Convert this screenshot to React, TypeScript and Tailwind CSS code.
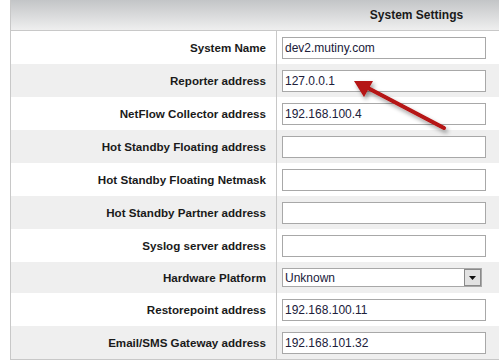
const rows: { label: string; value?: string; select?: boolean }[] = [
  { label: 'System Name', value: 'dev2.mutiny.com' },
  { label: 'Reporter address', value: '127.0.0.1' },
  { label: 'NetFlow Collector address', value: '192.168.100.4' },
  { label: 'Hot Standby Floating address', value: '' },
  { label: 'Hot Standby Floating Netmask', value: '' },
  { label: 'Hot Standby Partner address', value: '' },
  { label: 'Syslog server address', value: '' },
  { label: 'Hardware Platform', select: true },
  { label: 'Restorepoint address', value: '192.168.100.11' },
  { label: 'Email/SMS Gateway address', value: '192.168.101.32' },
];

function Arrow() {
  return (
    <svg className="absolute left-0 top-0 pointer-events-none" width="499" height="364">
      <defs>
        <filter id="shadow" x="-20%" y="-20%" width="140%" height="160%">
          <feDropShadow dx="2" dy="3" stdDeviation="2" floodColor="#000" floodOpacity="0.4" />
        </filter>
      </defs>
      <g filter="url(#shadow)">
        <line x1="366" y1="87" x2="444" y2="128" stroke="#b51212" strokeWidth="4" strokeLinecap="round" />
        <polygon points="354,81 373,81 364,97" fill="#b51212" />
      </g>
    </svg>
  );
}

function SelectBox() {
  return (
    <div className="w-[200px] h-[19px] border border-[#a8a8a8] bg-white flex items-center justify-between">
      <span className="pl-[2px] text-[12px] text-[#20203a]">Unknown</span>
      <div className="w-[17px] h-[17px] border border-[#8a8a8a] bg-[#e2e2e2] flex items-center justify-center">
        <svg width="7" height="4" viewBox="0 0 7 4">
          <polygon points="0,0 7,0 3.5,4" fill="#111" />
        </svg>
      </div>
    </div>
  );
}

export default function App() {
  return (
    <div
      className="relative w-[499px] h-[364px] overflow-hidden bg-white"
      style={{ fontFamily: '"Liberation Sans", Arial, sans-serif' }}
    >
      <div className="ml-[10px] w-[546px] border-l border-b border-[#c8c8c8]">
        <div className="grid grid-cols-[266px_1fr] h-[31px] border-b border-[#c8c8c8] bg-gradient-to-b from-[#c3c5c7] to-[#efefef]">
          <div />
          <div className="flex items-center justify-center text-[12px] font-bold text-[#1a1a1a]">
            System Settings
          </div>
        </div>
        {rows.map((r, i) => (
          <div
            key={r.label}
            className={`grid grid-cols-[266px_1fr] ${r.select ? 'h-[31px]' : 'h-[33px]'} ${
              i % 2 === 1 ? 'bg-[#efefef]' : 'bg-white'
            }`}
          >
            <div className="flex items-center justify-end pr-[10px] border-r border-[#c8c8c8] text-[11.6px] font-bold text-[#1a1a1a]">
              {r.label}
            </div>
            <div className="flex items-center pl-[5px]">
              {r.select ? (
                <SelectBox />
              ) : (
                <div className="w-[204px] h-[22px] border border-[#a8a8a8] bg-white flex items-center pl-[2px] text-[12px] text-[#20203a]">
                  {r.value}
                </div>
              )}
            </div>
          </div>
        ))}
      </div>
      <Arrow />
    </div>
  );
}
